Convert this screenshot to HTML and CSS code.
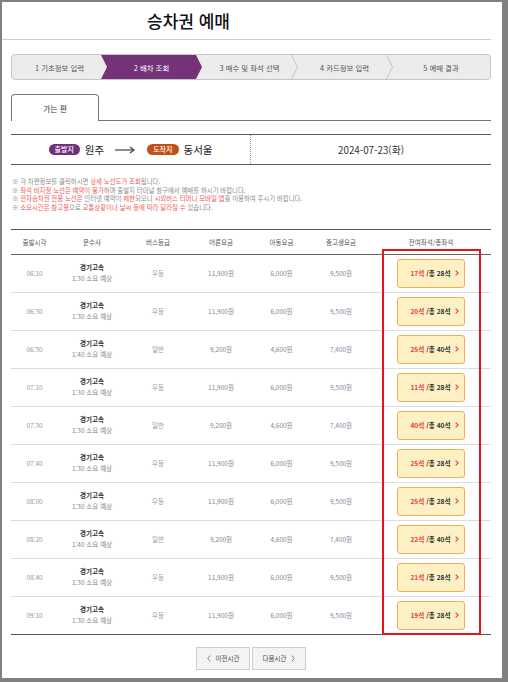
FILE: index.html
```html
<!DOCTYPE html>
<html lang="ko">
<head>
<meta charset="utf-8">
<title>승차권 예매</title>
<link rel="stylesheet" href="styles.css">
</head>
<body>
<div class="page">
  <header class="head"><h1 class="title">승차권 예매</h1></header>
  <main class="content">
    <ol class="steps">
      <li class="step s1">1 기초정보 입력</li>
      <li class="step active">2 배차 조회</li>
      <li class="step sep">3 매수 및 좌석 선택</li>
      <li class="step sep">4 카드정보 입력</li>
      <li class="step last">5 예매 결과</li>
    </ol>

    <div class="tabs"><div class="tab">가는 편</div><div class="tab-rest"></div></div>

    <div class="route">
      <div class="route-left">
        <span class="badge dep">출발지</span><span class="city">원주</span>
        <svg class="arrow" width="20" height="8" viewBox="0 0 20 8"><line x1="0" y1="4" x2="19" y2="4" stroke="#444" stroke-width="1.2"/><polyline points="15,1 19,4 15,7" fill="none" stroke="#444" stroke-width="1.2"/></svg>
        <span class="badge arr">도착지</span><span class="city">동서울</span>
      </div>
      <div class="route-date">2024-07-23(화)</div>
    </div>

    <ul class="notice">
      <li>※ 각 차편정보를 클릭하시면 <em>상세 노선도가 조회</em>됩니다.</li>
      <li>※ <em>좌석 비지정 노선은 예약이 불가</em>하며 출발지 터미널 창구에서 예매를 하시기 바랍니다.</li>
      <li>※ <em>전자승차권 전용 노선은</em> 인터넷 예약이 <em>제한</em>되오니 <em>시외버스 티머니 모바일 앱</em>을 이용하여 주시기 바랍니다.</li>
      <li>※ <em>소요시간은 참고용</em>으로 <em>교통상황이나 날씨 등에 따라 달라질 수</em> 있습니다.</li>
    </ul>

    <div class="table-wrap">
      <div class="grid">
        <div class="row thead">
          <div>출발시각</div><div>운수사</div><div>버스등급</div><div>어른요금</div><div>아동요금</div><div>중고생요금</div><div>잔여좌석/총좌석</div>
        </div>
        <div class="row"><div class="time">06:10</div><div class="co"><b>경기고속</b><span>1:30 소요 예상</span></div><div class="grade">우등</div><div class="fare">11,900원</div><div class="fare">6,000원</div><div class="fare">9,500원</div><div><button class="seat"><span class="rem">17석</span>&nbsp;/총 28석<svg class="chev" width="4" height="6" viewBox="0 0 4 6"><polyline points="0.6,0.6 3.2,3 0.6,5.4" fill="none" stroke="#f03c3c" stroke-width="1.1"/></svg></button></div></div>
        <div class="row"><div class="time">06:30</div><div class="co"><b>경기고속</b><span>1:30 소요 예상</span></div><div class="grade">우등</div><div class="fare">11,900원</div><div class="fare">6,000원</div><div class="fare">9,500원</div><div><button class="seat"><span class="rem">20석</span>&nbsp;/총 28석<svg class="chev" width="4" height="6" viewBox="0 0 4 6"><polyline points="0.6,0.6 3.2,3 0.6,5.4" fill="none" stroke="#f03c3c" stroke-width="1.1"/></svg></button></div></div>
        <div class="row"><div class="time">06:50</div><div class="co"><b>경기고속</b><span>1:40 소요 예상</span></div><div class="grade">일반</div><div class="fare">9,200원</div><div class="fare">4,600원</div><div class="fare">7,400원</div><div><button class="seat"><span class="rem">25석</span>&nbsp;/총 40석<svg class="chev" width="4" height="6" viewBox="0 0 4 6"><polyline points="0.6,0.6 3.2,3 0.6,5.4" fill="none" stroke="#f03c3c" stroke-width="1.1"/></svg></button></div></div>
        <div class="row"><div class="time">07:10</div><div class="co"><b>경기고속</b><span>1:30 소요 예상</span></div><div class="grade">우등</div><div class="fare">11,900원</div><div class="fare">6,000원</div><div class="fare">9,500원</div><div><button class="seat"><span class="rem">11석</span>&nbsp;/총 28석<svg class="chev" width="4" height="6" viewBox="0 0 4 6"><polyline points="0.6,0.6 3.2,3 0.6,5.4" fill="none" stroke="#f03c3c" stroke-width="1.1"/></svg></button></div></div>
        <div class="row"><div class="time">07:30</div><div class="co"><b>경기고속</b><span>1:30 소요 예상</span></div><div class="grade">일반</div><div class="fare">9,200원</div><div class="fare">4,600원</div><div class="fare">7,400원</div><div><button class="seat"><span class="rem">40석</span>&nbsp;/총 40석<svg class="chev" width="4" height="6" viewBox="0 0 4 6"><polyline points="0.6,0.6 3.2,3 0.6,5.4" fill="none" stroke="#f03c3c" stroke-width="1.1"/></svg></button></div></div>
        <div class="row"><div class="time">07:40</div><div class="co"><b>경기고속</b><span>1:30 소요 예상</span></div><div class="grade">우등</div><div class="fare">11,900원</div><div class="fare">6,000원</div><div class="fare">9,500원</div><div><button class="seat"><span class="rem">25석</span>&nbsp;/총 28석<svg class="chev" width="4" height="6" viewBox="0 0 4 6"><polyline points="0.6,0.6 3.2,3 0.6,5.4" fill="none" stroke="#f03c3c" stroke-width="1.1"/></svg></button></div></div>
        <div class="row"><div class="time">08:00</div><div class="co"><b>경기고속</b><span>1:30 소요 예상</span></div><div class="grade">우등</div><div class="fare">11,900원</div><div class="fare">6,000원</div><div class="fare">9,500원</div><div><button class="seat"><span class="rem">25석</span>&nbsp;/총 28석<svg class="chev" width="4" height="6" viewBox="0 0 4 6"><polyline points="0.6,0.6 3.2,3 0.6,5.4" fill="none" stroke="#f03c3c" stroke-width="1.1"/></svg></button></div></div>
        <div class="row"><div class="time">08:20</div><div class="co"><b>경기고속</b><span>1:40 소요 예상</span></div><div class="grade">일반</div><div class="fare">9,200원</div><div class="fare">4,600원</div><div class="fare">7,400원</div><div><button class="seat"><span class="rem">22석</span>&nbsp;/총 40석<svg class="chev" width="4" height="6" viewBox="0 0 4 6"><polyline points="0.6,0.6 3.2,3 0.6,5.4" fill="none" stroke="#f03c3c" stroke-width="1.1"/></svg></button></div></div>
        <div class="row"><div class="time">08:40</div><div class="co"><b>경기고속</b><span>1:30 소요 예상</span></div><div class="grade">우등</div><div class="fare">11,900원</div><div class="fare">6,000원</div><div class="fare">9,500원</div><div><button class="seat"><span class="rem">21석</span>&nbsp;/총 28석<svg class="chev" width="4" height="6" viewBox="0 0 4 6"><polyline points="0.6,0.6 3.2,3 0.6,5.4" fill="none" stroke="#f03c3c" stroke-width="1.1"/></svg></button></div></div>
        <div class="row lastrow"><div class="time">09:10</div><div class="co"><b>경기고속</b><span>1:30 소요 예상</span></div><div class="grade">우등</div><div class="fare">11,900원</div><div class="fare">6,000원</div><div class="fare">9,500원</div><div><button class="seat"><span class="rem">19석</span>&nbsp;/총 28석<svg class="chev" width="4" height="6" viewBox="0 0 4 6"><polyline points="0.6,0.6 3.2,3 0.6,5.4" fill="none" stroke="#f03c3c" stroke-width="1.1"/></svg></button></div></div>
      </div>
      <div class="highlight"></div>
    </div>

    <div class="pager">
      <button class="pbtn"><svg width="4" height="7" viewBox="0 0 4 7"><polyline points="3.4,0.5 0.6,3.5 3.4,6.5" fill="none" stroke="#777" stroke-width="0.9"/></svg>이전시간</button>
      <button class="pbtn">다음시간<svg width="4" height="7" viewBox="0 0 4 7"><polyline points="0.6,0.5 3.4,3.5 0.6,6.5" fill="none" stroke="#777" stroke-width="0.9"/></svg></button>
    </div>
  </main>
</div>
</body>
</html>
```

FILE: styles.css
```css
* { box-sizing: border-box; }
html, body { margin: 0; padding: 0; }
body {
  background: #808080;
  font-family: "Noto Sans CJK KR", "Noto Sans", sans-serif;
  color: #333;
}
.page {
  margin: 2px 0 0 2px;
  width: 500px;
  height: 676px;
  background: #fff;
}
.head {
  width: 489px;
  height: 38px;
  border-bottom: 1px solid #cfcfcf;
}
.title {
  margin: 0;
  padding-left: 145px;
  font-size: 17px;
  line-height: 37px;
  font-weight: 500;
  color: #111;
}
.content {
  padding: 0 11px 0 9px;
}

/* steps */
.steps {
  list-style: none;
  margin: 14px 0 0;
  padding: 0;
  display: flex;
  height: 26px;
  border: 1px solid #c6c6c6;
  border-radius: 4px;
  background: #ececec;
  overflow: hidden;
}
.step {
  position: relative;
  width: 95px;
  flex: none;
  display: flex;
  align-items: center;
  justify-content: center;
  font-size: 7.4px;
  color: #555;
  white-space: nowrap;
}
.step.active {
  width: 101px;
  margin-left: -6px;
  background: #743279;
  color: #fff;
  clip-path: polygon(0 0, calc(100% - 6px) 0, 100% 50%, calc(100% - 6px) 100%, 0 100%, 6px 50%);
}
.step.last { flex: 1; width: auto; }
.step.sep::after {
  content: "";
  position: absolute;
  right: -1px;
  top: 0;
  width: 7px;
  height: 100%;
  background: #c4c4c4;
  clip-path: polygon(0 0, 1px 0, 7px 50%, 1px 100%, 0 100%, 6px 50%);
}

/* tab */
.tabs {
  margin-top: 14px;
  display: flex;
  height: 27px;
}
.tab {
  width: 88px;
  border: 1px solid #777;
  border-bottom: none;
  border-radius: 4px 4px 0 0;
  display: flex;
  align-items: center;
  justify-content: center;
  font-size: 7.8px;
  color: #333;
}
.tab-rest {
  flex: 1;
  border-bottom: 1px solid #777;
}

/* route */
.route {
  margin-top: 13px;
  height: 31px;
  border-top: 1px solid #5a5a5a;
  border-bottom: 1px solid #5a5a5a;
  display: grid;
  grid-template-columns: 240px 1fr;
}
.route-left {
  display: flex;
  align-items: center;
  justify-content: center;
  border-right: 1px dotted #999;
}
.badge {
  display: inline-block;
  height: 11px;
  line-height: 11px;
  padding: 0 6px;
  border-radius: 6px;
  font-size: 7px;
  color: #fff;
  font-weight: 500;
}
.badge.dep { background: #6f2f7a; }
.badge.arr { background: #c24f17; }
.city {
  margin-left: 5px;
  font-size: 10.5px;
  color: #222;
}
.arrow { margin: 0 12px 0 11px; }
.route-date {
  display: flex;
  align-items: center;
  justify-content: center;
  font-size: 9.8px;
  color: #333;
}

/* notice */
.notice {
  list-style: none;
  margin: 13px 0 0;
  padding: 0 0 0 1px;
  font-size: 6.4px;
  line-height: 8.7px;
  color: #8c8c8c;
  white-space: nowrap;
}
.notice em {
  font-style: normal;
  color: #f05a5a;
}

/* table */
.table-wrap {
  position: relative;
  margin-top: 16px;
}
.grid {
  border-top: 1px solid #555;
}
.row {
  display: grid;
  grid-template-columns: 47px 68px 64px 62px 59px 60px 1fr;
  align-items: center;
  text-align: center;
  height: 38px;
  border-bottom: 1px solid #dcdcdc;
  font-size: 6.5px;
  color: #888;
}
.row.thead {
  height: 25px;
  border-bottom: 1px solid #666;
  color: #555;
}
.row.lastrow { border-bottom: 1px solid #555; }
.time { color: #999; }
.co {
  display: flex;
  flex-direction: column;
  align-items: center;
  line-height: 11px;
}
.co b { color: #333; font-weight: 700; }
.co span { color: #888; }
.grade { color: #999; }
.fare { color: #7f8a98; }
.seat {
  display: inline-flex;
  align-items: center;
  justify-content: center;
  width: 68px;
  height: 29px;
  padding: 0 2px 0 9px;
  border: 1px solid #f2ad55;
  border-radius: 3px;
  background: #fdf0c3;
  font-family: inherit;
  font-size: 6.6px;
  font-weight: 700;
  color: #333;
  cursor: pointer;
}
.seat .rem { color: #f03c3c; }
.chev { margin-left: 4px; }
.highlight {
  position: absolute;
  left: 371px;
  top: 20px;
  width: 99px;
  height: 386px;
  border: 2px solid #e4151f;
}

/* pager */
.pager {
  margin-top: 12px;
  display: flex;
  justify-content: center;
  gap: 2px;
}
.pbtn {
  width: 54px;
  height: 23px;
  display: inline-flex;
  align-items: center;
  justify-content: center;
  gap: 5px;
  border: 1px solid #cfcfcf;
  background: #f3f3f3;
  font-family: inherit;
  font-size: 6.5px;
  color: #444;
  padding: 0;
}
```
